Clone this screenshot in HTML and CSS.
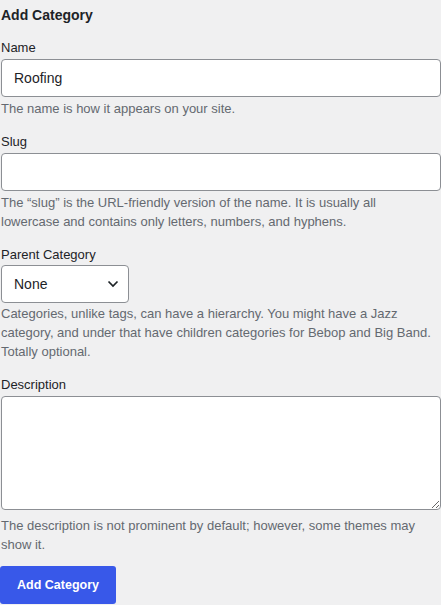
FILE: index.html
```html
<!DOCTYPE html>
<html lang="en">
<head>
    <meta charset="UTF-8">
    <meta name="viewport" content="width=device-width, initial-scale=1.0">
    <title>Add Category</title>
    <link rel="stylesheet" href="styles.css">
</head>
<body>
    <form class="add-term" action="#">
        <h2>Add Category</h2>

        <div class="form-field">
            <label for="tag-name">Name</label>
            <input type="text" id="tag-name" value="Roofing">
            <p class="description">The name is how it appears on your site.</p>
        </div>

        <div class="form-field">
            <label for="tag-slug">Slug</label>
            <input type="text" id="tag-slug">
            <p class="description narrow">The “slug” is the URL-friendly version of the name. It is usually all lowercase and contains only letters, numbers, and hyphens.</p>
        </div>

        <div class="form-field parent">
            <label for="parent">Parent Category</label>
            <div class="select-wrap">
                <select id="parent">
                    <option>None</option>
                </select>
                <svg class="chevron" width="12" height="8" viewBox="0 0 12 8"><path d="M1.5 1.5l4.5 4.5 4.5-4.5" fill="none" stroke="#1d2327" stroke-width="1.7"/></svg>
            </div>
            <p class="description">Categories, unlike tags, can have a hierarchy. You might have a Jazz category, and under that have children categories for Bebop and Big Band. Totally optional.</p>
        </div>

        <div class="form-field">
            <label for="tag-description">Description</label>
            <textarea id="tag-description"></textarea>
            <p class="description">The description is not prominent by default; however, some themes may show it.</p>
        </div>

        <button class="button-primary">Add Category</button>
    </form>
</body>
</html>
```

FILE: styles.css
```css
* {
    box-sizing: border-box;
    margin: 0;
}
body {
    background-color: #f0f0f1;
    font-family: "Liberation Sans", Arial, sans-serif;
    font-size: 13px;
    line-height: 19px;
    color: #1d2327;
}
.add-term {
    padding-left: 1px;
    display: flex;
    flex-direction: column;
}
h2 {
    font-size: 14px;
    font-weight: bold;
    line-height: 19px;
    padding-top: 6px;
    margin-bottom: 13px;
}
.form-field {
    margin-bottom: 14px;
}
label {
    display: block;
    color: #1d2327;
    margin-bottom: 2px;
}
input,
select,
textarea {
    display: block;
    border: 1px solid #8c8f94;
    border-radius: 4px;
    background-color: #fff;
    font-family: inherit;
    font-size: 14px;
    color: #1d2327;
}
input {
    width: 440px;
    height: 38px;
    padding: 0 12px;
}
.description {
    margin-top: 2px;
    color: #646970;
}
.description.narrow {
    max-width: 400px;
}
.parent label {
    margin-bottom: 1px;
}
.parent .description {
    margin-top: 1px;
}
.select-wrap {
    position: relative;
    width: 128px;
}
select {
    width: 128px;
    height: 38px;
    padding: 0 12px;
    appearance: none;
    -webkit-appearance: none;
}
.chevron {
    position: absolute;
    right: 10px;
    top: 15px;
}
textarea {
    width: 440px;
    height: 114px;
    padding: 6px 12px;
    resize: both;
}
textarea + .description {
    margin-top: 6px;
}
.form-field:last-of-type {
    margin-bottom: 12px;
}
.button-primary {
    align-self: flex-start;
    width: 116px;
    height: 38px;
    margin-left: -1px;
    border: 0;
    border-radius: 3px;
    background-color: #3858e9;
    color: #fff;
    font-family: inherit;
    font-size: 12.5px;
    font-weight: bold;
    cursor: pointer;
}
```
